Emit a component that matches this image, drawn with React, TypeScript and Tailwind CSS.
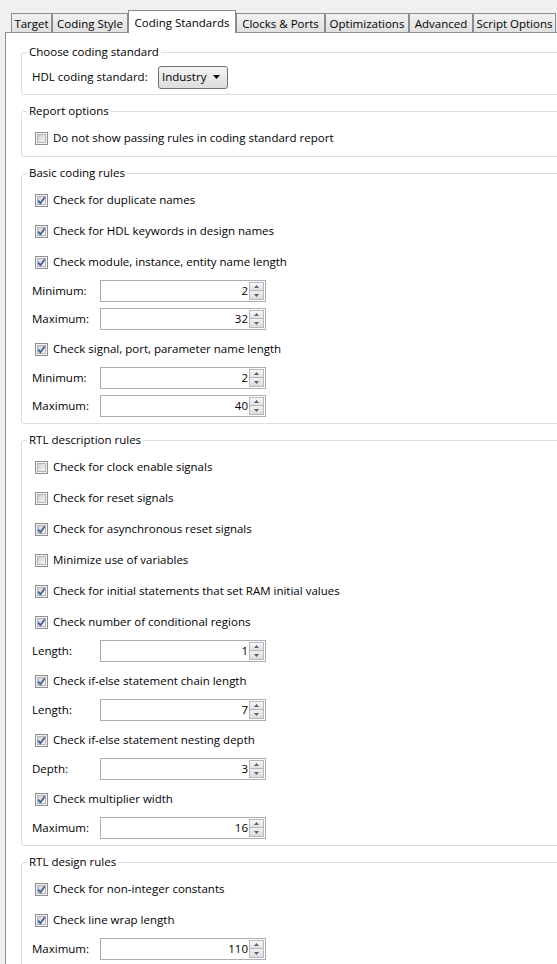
import React from 'react';

type Row =
  | { kind: 'check'; label: string; checked: boolean }
  | { kind: 'spin'; label: string; value: number };

const tabs = [
  { name: 'Target', w: 'w-[41px]' },
  { name: 'Coding Style', w: 'w-[76px]' },
  { name: 'Coding Standards', w: 'w-[108px]', active: true },
  { name: 'Clocks & Ports', w: 'w-[89px]' },
  { name: 'Optimizations', w: 'w-[84px]' },
  { name: 'Advanced', w: 'w-[64px]' },
  { name: 'Script Options', w: 'w-[83px]' },
];

const groups: { title: string; rows: Row[] }[] = [
  {
    title: 'Report options',
    rows: [{ kind: 'check', label: 'Do not show passing rules in coding standard report', checked: false }],
  },
  {
    title: 'Basic coding rules',
    rows: [
      { kind: 'check', label: 'Check for duplicate names', checked: true },
      { kind: 'check', label: 'Check for HDL keywords in design names', checked: true },
      { kind: 'check', label: 'Check module, instance, entity name length', checked: true },
      { kind: 'spin', label: 'Minimum:', value: 2 },
      { kind: 'spin', label: 'Maximum:', value: 32 },
      { kind: 'check', label: 'Check signal, port, parameter name length', checked: true },
      { kind: 'spin', label: 'Minimum:', value: 2 },
      { kind: 'spin', label: 'Maximum:', value: 40 },
    ],
  },
  {
    title: 'RTL description rules',
    rows: [
      { kind: 'check', label: 'Check for clock enable signals', checked: false },
      { kind: 'check', label: 'Check for reset signals', checked: false },
      { kind: 'check', label: 'Check for asynchronous reset signals', checked: true },
      { kind: 'check', label: 'Minimize use of variables', checked: false },
      { kind: 'check', label: 'Check for initial statements that set RAM initial values', checked: true },
      { kind: 'check', label: 'Check number of conditional regions', checked: true },
      { kind: 'spin', label: 'Length:', value: 1 },
      { kind: 'check', label: 'Check if-else statement chain length', checked: true },
      { kind: 'spin', label: 'Length:', value: 7 },
      { kind: 'check', label: 'Check if-else statement nesting depth', checked: true },
      { kind: 'spin', label: 'Depth:', value: 3 },
      { kind: 'check', label: 'Check multiplier width', checked: true },
      { kind: 'spin', label: 'Maximum:', value: 16 },
    ],
  },
  {
    title: 'RTL design rules',
    rows: [
      { kind: 'check', label: 'Check for non-integer constants', checked: true },
      { kind: 'check', label: 'Check line wrap length', checked: true },
      { kind: 'spin', label: 'Maximum:', value: 110 },
    ],
  },
];

const CheckBox = ({ checked }: { checked: boolean }) => (
  <svg width="13" height="13" viewBox="0 0 13 13" className="shrink-0">
    <defs>
      <linearGradient id="cbfill" x1="0" y1="0" x2="1" y2="1">
        <stop offset="0" stopColor="#cfcfcf" />
        <stop offset="1" stopColor="#f7f7f7" />
      </linearGradient>
    </defs>
    <rect x="0.5" y="0.5" width="12" height="12" fill="#f4f4f4" stroke="#8e8f8f" />
    <rect x="2.5" y="2.5" width="8" height="8" fill="url(#cbfill)" stroke="#b5b5b5" />
    {checked && (
      <path d="M3.2 6.6 L5.4 9.2 L9.8 3.2" fill="none" stroke="#46609a" strokeWidth="1.8" />
    )}
  </svg>
);

const SpinBox = ({ value }: { value: number }) => (
  <div className="flex h-[22px] w-[166px] items-center border border-[#abadb3] bg-white">
    <span className="flex-1 pr-[1px] text-right">{value}</span>
    <div className="mr-[1px] flex h-[18px] w-[15px] flex-col">
      <div className="flex h-[9px] items-center justify-center border border-[#b8b8b8] bg-gradient-to-b from-[#f8f8f8] to-[#e2e2e2]">
        <svg width="5" height="3" viewBox="0 0 5 3">
          <path d="M0 3 L2.5 0 L5 3 Z" fill="#4d6185" />
        </svg>
      </div>
      <div className="flex h-[9px] items-center justify-center border border-t-0 border-[#b8b8b8] bg-gradient-to-b from-[#f0f0f0] to-[#dcdcdc]">
        <svg width="5" height="3" viewBox="0 0 5 3">
          <path d="M0 0 L5 0 L2.5 3 Z" fill="#4d6185" />
        </svg>
      </div>
    </div>
  </div>
);

const Group = ({ title, children }: { title: string; children: React.ReactNode }) => (
  <div className="relative rounded-[3px] border border-[#d5dfe5] pb-[3px] pt-[10px]">
    <span className="absolute -top-[9px] left-[5px] bg-white px-[2px] leading-[16px]">{title}</span>
    {children}
  </div>
);

export default function App() {
  return (
    <div className="h-[964px] w-[557px] overflow-hidden bg-[#f0f0f0] font-['Segoe_UI','Open_Sans',sans-serif] text-[11.5px] text-black">
      <div className="flex h-[32px] items-end pl-[11px]">
        {tabs.map((t) =>
          t.active ? (
            <div
              key={t.name}
              className={`relative z-10 -mb-px flex h-[23px] ${t.w} items-start justify-center border-x border-t border-[#898c95] bg-white pt-[3px]`}
            >
              {t.name}
            </div>
          ) : (
            <div
              key={t.name}
              className={`flex h-[19px] ${t.w} items-center justify-center border-x border-t border-[#898c95] bg-gradient-to-b from-[#f2f2f2] to-[#e0e0e0] pt-[2px]`}
            >
              {t.name}
            </div>
          )
        )}
      </div>
      <div className="ml-[5px] flex w-[620px] flex-col gap-[16px] border-l border-t border-[#898c95] bg-white pb-[20px] pl-[15px] pr-[10px] pt-[19px]">
        <Group title="Choose coding standard">
          <div className="flex h-[28px] items-center pl-[10px]">
            <span className="w-[126px]">HDL coding standard:</span>
            <div className="flex h-[23px] w-[70px] items-center justify-between rounded-[3px] border border-[#707070] bg-gradient-to-b from-[#f3f3f3] to-[#dddddd] pl-[3px] pr-[7px]">
              <span>Industry</span>
              <svg width="7" height="4" viewBox="0 0 7 4">
                <path d="M0 0 L7 0 L3.5 4 Z" fill="#000" />
              </svg>
            </div>
          </div>
        </Group>
        {groups.map((g) => (
          <Group key={g.title} title={g.title}>
            {g.rows.map((r, i) =>
              r.kind === 'check' ? (
                <div key={i} className="flex h-[31px] items-center pl-[13px] pt-[1px]">
                  <CheckBox checked={r.checked} />
                  <span className="ml-[5px]">{r.label}</span>
                </div>
              ) : (
                <div key={i} className="flex h-[28px] items-center pl-[10px]">
                  <span className="w-[68px]">{r.label}</span>
                  <SpinBox value={r.value} />
                </div>
              )
            )}
          </Group>
        ))}
      </div>
    </div>
  );
}
